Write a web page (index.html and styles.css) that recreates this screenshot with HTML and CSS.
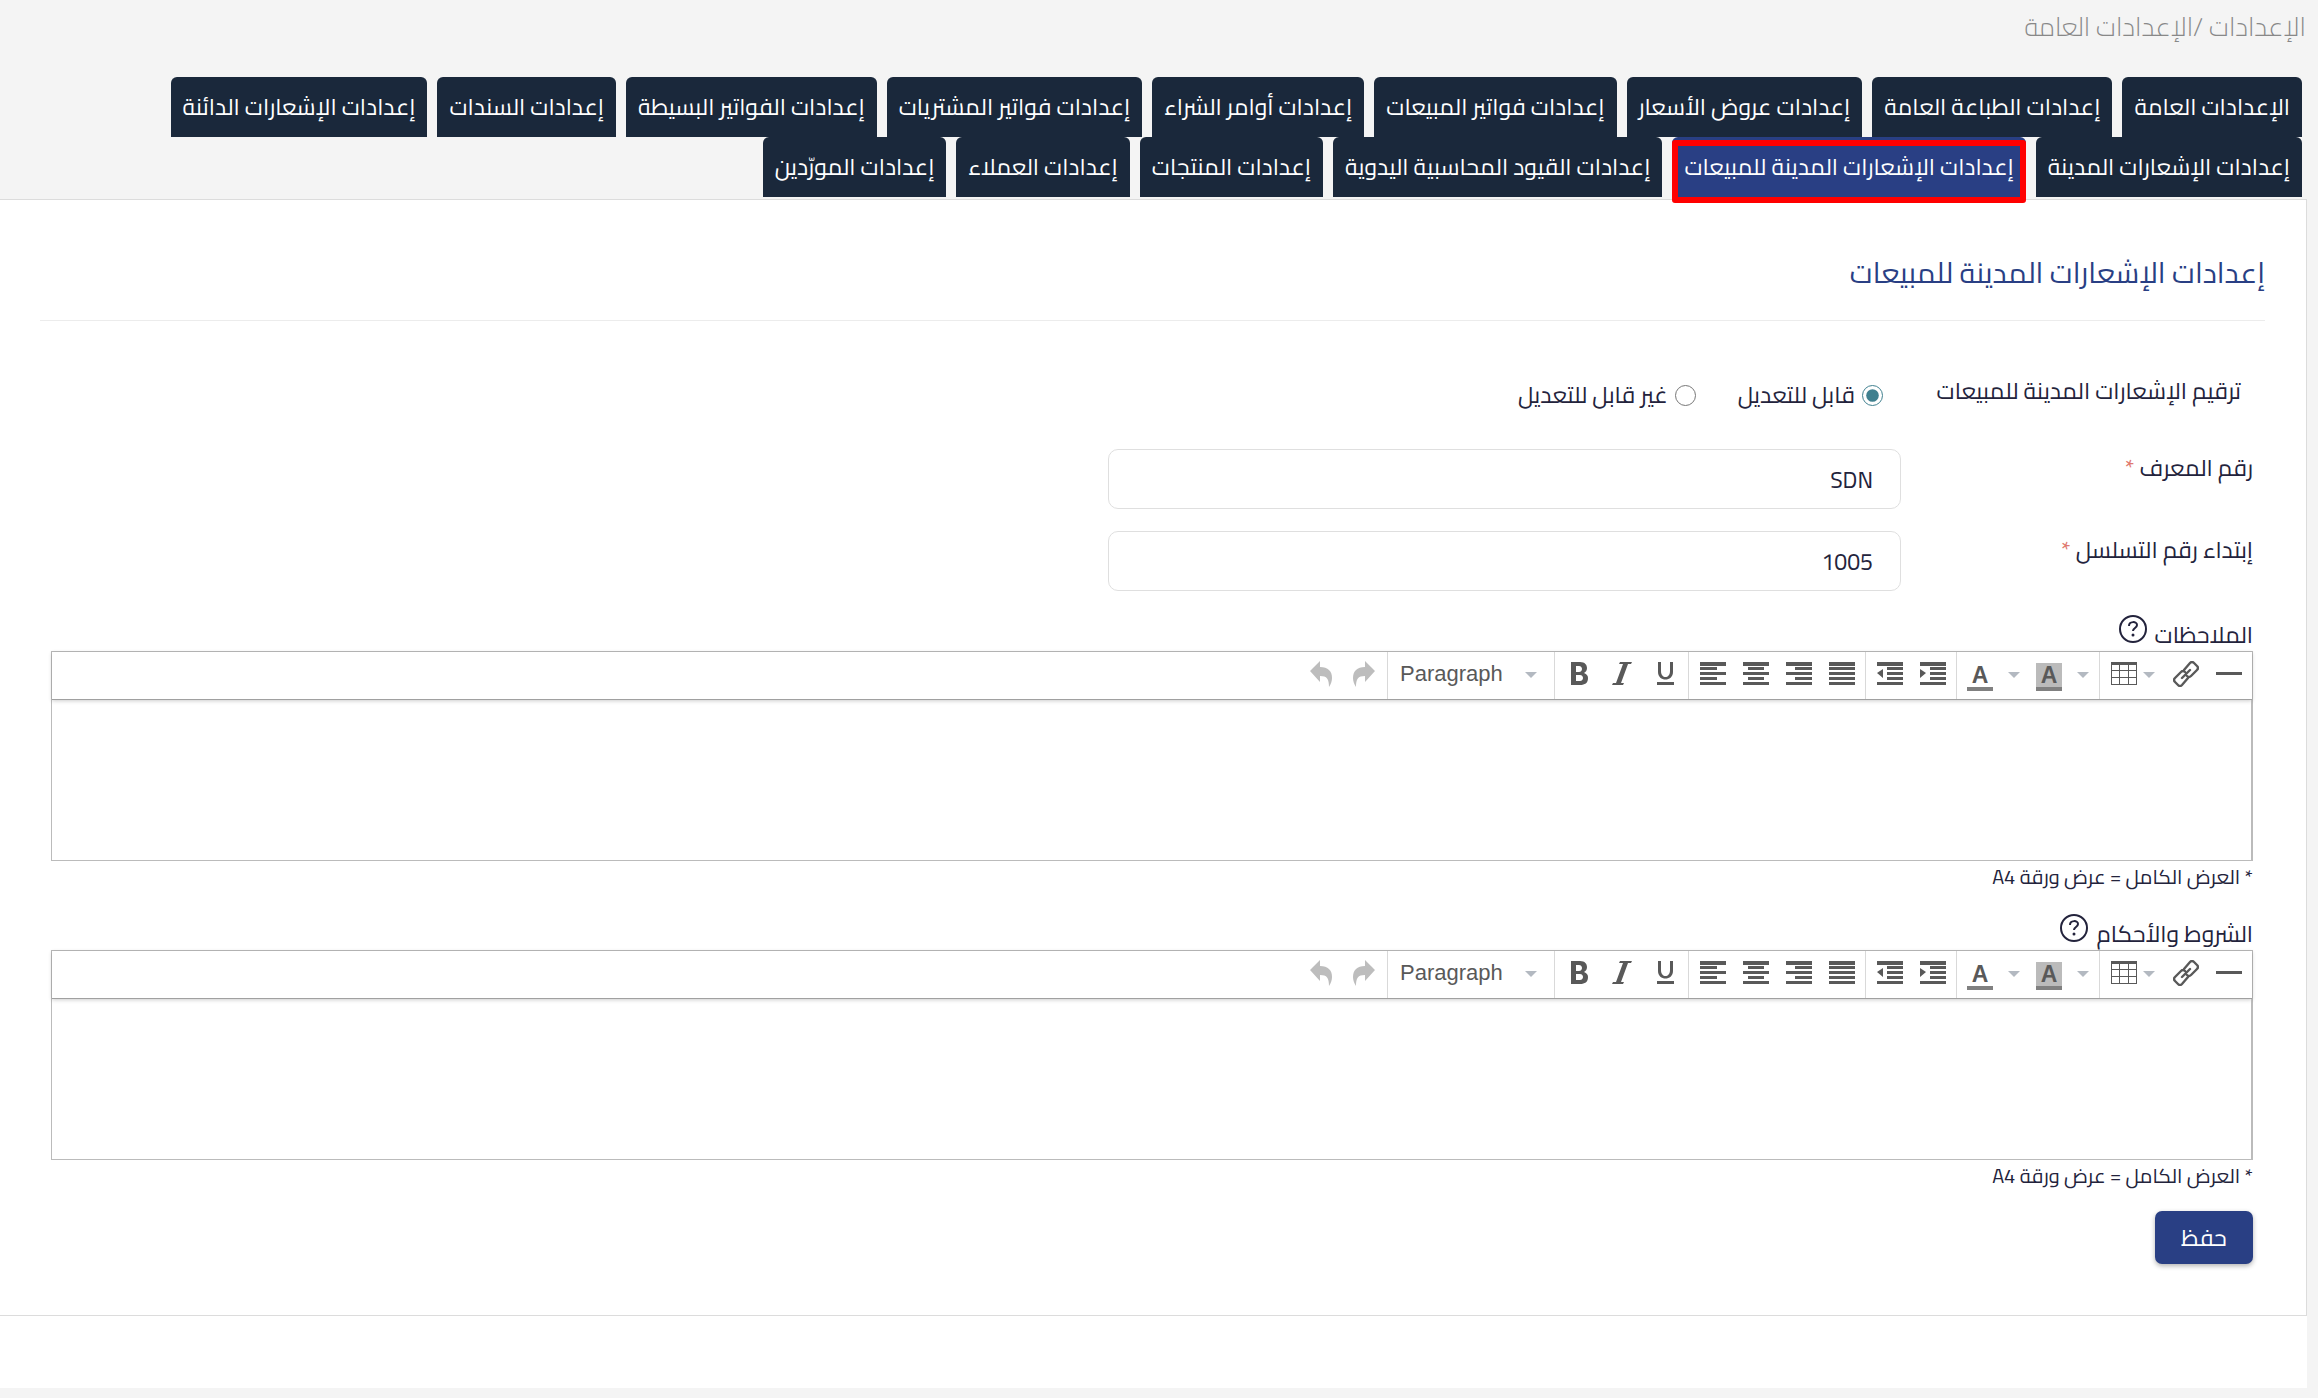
FILE: index.html
```
<!DOCTYPE html>
<html lang="ar" dir="rtl">
<head>
    <meta charset="UTF-8">
    <meta name="viewport" content="width=device-width, initial-scale=1.0">
    <title>إعدادات الإشعارات المدينة للمبيعات</title>
    <link rel="stylesheet" href="styles.css">
</head>
<body>
    <!-- Icons shared by both editors -->
    <svg class="sprite" aria-hidden="true">
        <symbol id="i-undo" viewBox="0 0 26 26"><path d="M2 10 12 0v6c8 0 12 4 12 11 0 3-1 6-3 9 0-8-2-11-9-11v6z"/></symbol>
        <symbol id="i-redo" viewBox="0 0 26 26"><path d="M24 10 14 0v6C6 6 2 10 2 17c0 3 1 6 3 9 0-8 2-11 9-11v6z"/></symbol>
        <symbol id="i-bold" viewBox="0 0 26 26"><path fill-rule="evenodd" d="M5 1h9c5 0 7 3 7 6 0 2-1 4-3 5 3 1 4 3 4 5 0 5-3 7-8 7H5zm5 4v6h3c4 0 4-6 0-6zm0 9v6h4c4 0 4-6 0-6z"/></symbol>
        <symbol id="i-italic" viewBox="0 0 26 26"><path d="M11 1h12l-1 2h-3l-7 19h3l-1 2H3l1-2h3l7-19h-4z"/></symbol>
        <symbol id="i-underline" viewBox="0 0 26 26"><path d="M5 21h17v3H5zM6 1h3v9c0 8 9 8 9 0V1h3v10c0 10-15 10-15 0z"/></symbol>
        <symbol id="i-left" viewBox="0 0 26 26"><path d="M0 1h26v4H0zM0 6h17v3H0zM0 11h26v3H0zM0 16h17v3H0zM0 21h26v3H0z"/></symbol>
        <symbol id="i-center" viewBox="0 0 26 26"><path d="M0 1h26v4H0zM5 6h16v3H5zM0 11h26v3H0zM5 16h16v3H5zM0 21h26v3H0z"/></symbol>
        <symbol id="i-right" viewBox="0 0 26 26"><path d="M0 1h26v4H0zM9 6h17v3H9zM0 11h26v3H0zM9 16h17v3H9zM0 21h26v3H0z"/></symbol>
        <symbol id="i-justify" viewBox="0 0 26 26"><path d="M0 1h26v4H0zM0 6h26v3H0zM0 11h26v3H0zM0 16h26v3H0zM0 21h26v3H0z"/></symbol>
        <symbol id="i-outdent" viewBox="0 0 26 26"><path d="M0 1h26v4H0zM10 6h16v3H10zM10 11h16v3H10zM10 16h16v3H10zM0 21h26v3H0zM6 8v9l-6-5z"/></symbol>
        <symbol id="i-indent" viewBox="0 0 26 26"><path d="M0 1h26v4H0zM10 6h16v3H10zM10 11h16v3H10zM10 16h16v3H10zM0 21h26v3H0zM0 8v9l6-5z"/></symbol>
        <symbol id="i-table" viewBox="0 0 26 26"><path fill-rule="evenodd" d="M0 1h26v23H0zM1 4v5h7V4zm8 0v5h8V4zm9 0v5h7V4zM1 10v6h7v-6zm8 0v6h8v-6zm9 0v6h7v-6zM1 17v6h7v-6zm8 0v6h8v-6zm9 0v6h7v-6z"/></symbol>
        <symbol id="i-link" viewBox="0 0 26 26"><g fill="none" stroke="currentColor" stroke-width="2.4" stroke-linecap="round"><path d="M11 9l6-7q2-2 4 0l3 3q2 2 0 4l-6 6q-2 2-4 0M15 17l-6 7q-2 2-4 0l-3-3q-2-2 0-4l6-6q2-2 4 0M9 17l8-8"/></g></symbol>
        <symbol id="i-line" viewBox="0 0 26 26"><path d="M0 11h26v3H0z"/></symbol>
        <symbol id="i-caret" viewBox="0 0 12 6"><path d="M0 0h12L6 6z"/></symbol>
        <symbol id="i-help" viewBox="0 0 28 28"><g fill="none" stroke="currentColor" stroke-width="2"><circle cx="14" cy="14" r="13"/><path d="M10 11c0-5 8-5 8-1 0 3-4 3-4 6"/></g><circle cx="14" cy="20" r="1.5"/></symbol>
    </svg>

    <nav class="breadcrumb">
        <a href="#">الإعدادات</a>
        <span>/الإعدادات العامة</span>
    </nav>

    <nav class="tabs">
        <a class="tab" href="#">الإعدادات العامة</a>
        <a class="tab" href="#">إعدادات الطباعة العامة</a>
        <a class="tab" href="#">إعدادات عروض الأسعار</a>
        <a class="tab" href="#">إعدادات فواتير المبيعات</a>
        <a class="tab" href="#">إعدادات أوامر الشراء</a>
        <a class="tab" href="#">إعدادات فواتير المشتريات</a>
        <a class="tab" href="#">إعدادات الفواتير البسيطة</a>
        <a class="tab" href="#">إعدادات السندات</a>
        <a class="tab" href="#">إعدادات الإشعارات الدائنة</a>
        <a class="tab" href="#">إعدادات الإشعارات المدينة</a>
        <a class="tab active" href="#">إعدادات الإشعارات المدينة للمبيعات</a>
        <a class="tab" href="#">إعدادات القيود المحاسبية اليدوية</a>
        <a class="tab" href="#">إعدادات المنتجات</a>
        <a class="tab" href="#">إعدادات العملاء</a>
        <a class="tab" href="#">إعدادات المورّدين</a>
    </nav>

    <main class="page">
        <form class="card">
            <h1 class="title">إعدادات الإشعارات المدينة للمبيعات</h1>

            <div class="fields">
                <div class="row row-radio" role="radiogroup" aria-labelledby="numbering">
                    <span class="label" id="numbering">ترقيم الإشعارات المدينة للمبيعات</span>
                    <div class="radios">
                        <label class="radio"><input type="radio" name="numbering" checked>قابل للتعديل</label>
                        <label class="radio"><input type="radio" name="numbering">غير قابل للتعديل</label>
                    </div>
                </div>
                <div class="row">
                    <label class="label" for="prefix">رقم المعرف <span class="required">*</span></label>
                    <input class="input" id="prefix" type="text" value="SDN">
                </div>
                <div class="row">
                    <label class="label" for="start">إبتداء رقم التسلسل <span class="required">*</span></label>
                    <input class="input" id="start" type="text" value="1005">
                </div>

                <section class="block">
                    <div class="block-label">
                        <label for="notes">الملاحظات</label>
                        <svg class="help"><use href="#i-help"/></svg>
                    </div>
                    <div class="editor">
                        <div class="toolbar" dir="ltr">
                            <div class="group muted">
                                <button type="button" class="tool" aria-label="Undo"><svg><use href="#i-undo"/></svg></button>
                                <button type="button" class="tool" aria-label="Redo"><svg><use href="#i-redo"/></svg></button>
                            </div>
                            <div class="group format">
                                <select aria-label="Format"><option>Paragraph</option></select>
                                <svg class="caret"><use href="#i-caret"/></svg>
                            </div>
                            <div class="group">
                                <button type="button" class="tool" aria-label="Bold"><svg><use href="#i-bold"/></svg></button>
                                <button type="button" class="tool" aria-label="Italic"><svg><use href="#i-italic"/></svg></button>
                                <button type="button" class="tool" aria-label="Underline"><svg><use href="#i-underline"/></svg></button>
                            </div>
                            <div class="group">
                                <button type="button" class="tool" aria-label="Align left"><svg><use href="#i-left"/></svg></button>
                                <button type="button" class="tool" aria-label="Align center"><svg><use href="#i-center"/></svg></button>
                                <button type="button" class="tool" aria-label="Align right"><svg><use href="#i-right"/></svg></button>
                                <button type="button" class="tool" aria-label="Justify"><svg><use href="#i-justify"/></svg></button>
                            </div>
                            <div class="group">
                                <button type="button" class="tool" aria-label="Outdent"><svg><use href="#i-outdent"/></svg></button>
                                <button type="button" class="tool" aria-label="Indent"><svg><use href="#i-indent"/></svg></button>
                            </div>
                            <div class="group">
                                <button type="button" class="tool split"><span class="letter">A</span><svg class="caret"><use href="#i-caret"/></svg></button>
                                <button type="button" class="tool split"><span class="letter filled">A</span><svg class="caret"><use href="#i-caret"/></svg></button>
                            </div>
                            <div class="group">
                                <button type="button" class="tool table" aria-label="Table"><svg><use href="#i-table"/></svg><svg class="caret"><use href="#i-caret"/></svg></button>
                                <button type="button" class="tool" aria-label="Link"><svg><use href="#i-link"/></svg></button>
                                <button type="button" class="tool" aria-label="Horizontal line"><svg><use href="#i-line"/></svg></button>
                            </div>
                        </div>
                        <textarea id="notes"></textarea>
                    </div>
                    <p class="hint">* العرض الكامل = عرض ورقة A4</p>
                </section>

                <section class="block">
                    <div class="block-label">
                        <label for="terms">الشروط والأحكام</label>
                        <svg class="help"><use href="#i-help"/></svg>
                    </div>
                    <div class="editor">
                        <div class="toolbar" dir="ltr">
                            <div class="group muted">
                                <button type="button" class="tool" aria-label="Undo"><svg><use href="#i-undo"/></svg></button>
                                <button type="button" class="tool" aria-label="Redo"><svg><use href="#i-redo"/></svg></button>
                            </div>
                            <div class="group format">
                                <select aria-label="Format"><option>Paragraph</option></select>
                                <svg class="caret"><use href="#i-caret"/></svg>
                            </div>
                            <div class="group">
                                <button type="button" class="tool" aria-label="Bold"><svg><use href="#i-bold"/></svg></button>
                                <button type="button" class="tool" aria-label="Italic"><svg><use href="#i-italic"/></svg></button>
                                <button type="button" class="tool" aria-label="Underline"><svg><use href="#i-underline"/></svg></button>
                            </div>
                            <div class="group">
                                <button type="button" class="tool" aria-label="Align left"><svg><use href="#i-left"/></svg></button>
                                <button type="button" class="tool" aria-label="Align center"><svg><use href="#i-center"/></svg></button>
                                <button type="button" class="tool" aria-label="Align right"><svg><use href="#i-right"/></svg></button>
                                <button type="button" class="tool" aria-label="Justify"><svg><use href="#i-justify"/></svg></button>
                            </div>
                            <div class="group">
                                <button type="button" class="tool" aria-label="Outdent"><svg><use href="#i-outdent"/></svg></button>
                                <button type="button" class="tool" aria-label="Indent"><svg><use href="#i-indent"/></svg></button>
                            </div>
                            <div class="group">
                                <button type="button" class="tool split"><span class="letter">A</span><svg class="caret"><use href="#i-caret"/></svg></button>
                                <button type="button" class="tool split"><span class="letter filled">A</span><svg class="caret"><use href="#i-caret"/></svg></button>
                            </div>
                            <div class="group">
                                <button type="button" class="tool table" aria-label="Table"><svg><use href="#i-table"/></svg><svg class="caret"><use href="#i-caret"/></svg></button>
                                <button type="button" class="tool" aria-label="Link"><svg><use href="#i-link"/></svg></button>
                                <button type="button" class="tool" aria-label="Horizontal line"><svg><use href="#i-line"/></svg></button>
                            </div>
                        </div>
                        <textarea id="terms"></textarea>
                    </div>
                    <p class="hint">* العرض الكامل = عرض ورقة A4</p>
                </section>

                <button type="submit" class="save">حفظ</button>
            </div>
        </form>
    </main>
</body>
</html>
```
FILE: styles.css
```
* {
    box-sizing: border-box;
}

body {
    margin: 0;
    background-color: #f4f4f4;
    color: #23233c;
    font-family: Cairo, "DejaVu Sans", sans-serif;
    font-size: 23px;
    line-height: 32px;
}

.sprite {
    display: none;
}

.breadcrumb {
    padding: 11px 12px 34px;
    color: #888;
    font-size: 26px;
    font-weight: 300;
}

.breadcrumb a {
    color: inherit;
    text-decoration: none;
}

/* Tabs */
.tabs {
    display: flex;
    flex-wrap: wrap;
    column-gap: 10px;
    padding: 0 16px 2px 96px;
}

.tab {
    position: relative;
    height: 60px;
    padding: 14px 12px;
    border-radius: 6px 6px 0 0;
    background-color: #1a283b;
    color: white;
    text-decoration: none;
    white-space: nowrap;
}

.tab.active {
    background-color: #293f84;
}

.tab.active::after {
    content: "";
    position: absolute;
    inset: 3px 0 -6px;
    border: 6px solid #ff0000;
    border-radius: 3px;
}

/* Card */
.page {
    margin-right: 11px;
    padding-bottom: 72px;
    background-color: white;
}

.card {
    padding: 49px 41px 51px 40px;
    border: 1px solid #dcdcdc;
    border-left: none;
}

.title {
    margin: 0;
    padding-bottom: 23px;
    border-bottom: 1px solid #ececec;
    color: #293f84;
    font-size: 29px;
    font-weight: normal;
    line-height: 48px;
}

.fields {
    padding: 54px 12px 0 11px;
}

.row {
    display: flex;
    margin-bottom: 22px;
}

.label {
    flex: 0 0 352px;
    padding-top: 3px;
}

.row-radio {
    margin-bottom: 38px;
}

.row-radio .label {
    padding: 0 12px 0 0;
}

.radios {
    display: flex;
    gap: 42px;
    padding: 4px 18px 0 0;
}

.radio {
    display: flex;
    align-items: center;
    gap: 7px;
}

.radio input {
    width: 21px;
    height: 21px;
    margin: 0;
    accent-color: #40808f;
}

.required {
    color: #e0796f;
}

.input {
    width: 36%;
    height: 60px;
    padding: 0 27px;
    border: 1px solid #dfdfdf;
    border-radius: 10px;
    color: inherit;
    font: inherit;
}

/* Rich text editors */
.block {
    margin-bottom: 19px;
}

.block-label {
    display: flex;
    align-items: flex-end;
    gap: 8px;
    height: 38px;
}

.help {
    width: 28px;
    height: 28px;
    margin-bottom: 8px;
    fill: currentColor;
}

.editor {
    border: 1px solid #bbb;
}

.toolbar {
    display: flex;
    justify-content: flex-end;
    height: 48px;
    border-bottom: 1px solid #a0a0a0;
    box-shadow: 0 1px 4px rgba(0,0,0,0.2);
    color: #595959;
    font-family: "Liberation Sans", Arial, sans-serif;
}

.group {
    display: flex;
    padding: 0 2px;
    border-left: 1px solid #d9d9d9;
}

.group:first-child {
    border-left: none;
}

.muted .tool {
    color: #bdbdbd;
}

.tool {
    display: flex;
    align-items: center;
    justify-content: center;
    width: 43px;
    height: 43px;
    padding: 0;
    border: none;
    background: none;
    color: inherit;
    font: inherit;
}

.tool svg {
    width: 26px;
    height: 26px;
    fill: currentColor;
}

.tool.split {
    gap: 15px;
    width: 69px;
}

.tool.table {
    gap: 6px;
    width: 62px;
}

.toolbar .caret {
    width: 12px;
    height: 6px;
    margin-top: 3px;
    fill: #b3b9c1;
}

.letter {
    width: 26px;
    height: 28px;
    margin-top: 6px;
    border-bottom: 4px solid #808080;
    font-size: 23px;
    font-weight: bold;
    line-height: 24px;
}

.letter.filled {
    background-color: #bbb;
}

.format {
    position: relative;
}

.format select {
    width: 162px;
    height: 43px;
    padding: 0 10px;
    border: none;
    appearance: none;
    background: none;
    color: inherit;
    font-family: inherit;
    font-size: 22px;
}

.format .caret {
    position: absolute;
    top: 17px;
    right: 17px;
    pointer-events: none;
}

.editor textarea {
    display: block;
    width: 100%;
    height: 160px;
    border: none;
    border-right: 1px solid #bbb;
    background: none;
    font: inherit;
    resize: none;
}

.hint {
    margin: 0;
    font-size: 20px;
}

.save {
    display: block;
    width: 98px;
    height: 53px;
    border: none;
    border-radius: 7px;
    background-color: #293f84;
    box-shadow: 0 2px 5px rgba(0,0,0,0.3);
    color: white;
    font: inherit;
}
```
